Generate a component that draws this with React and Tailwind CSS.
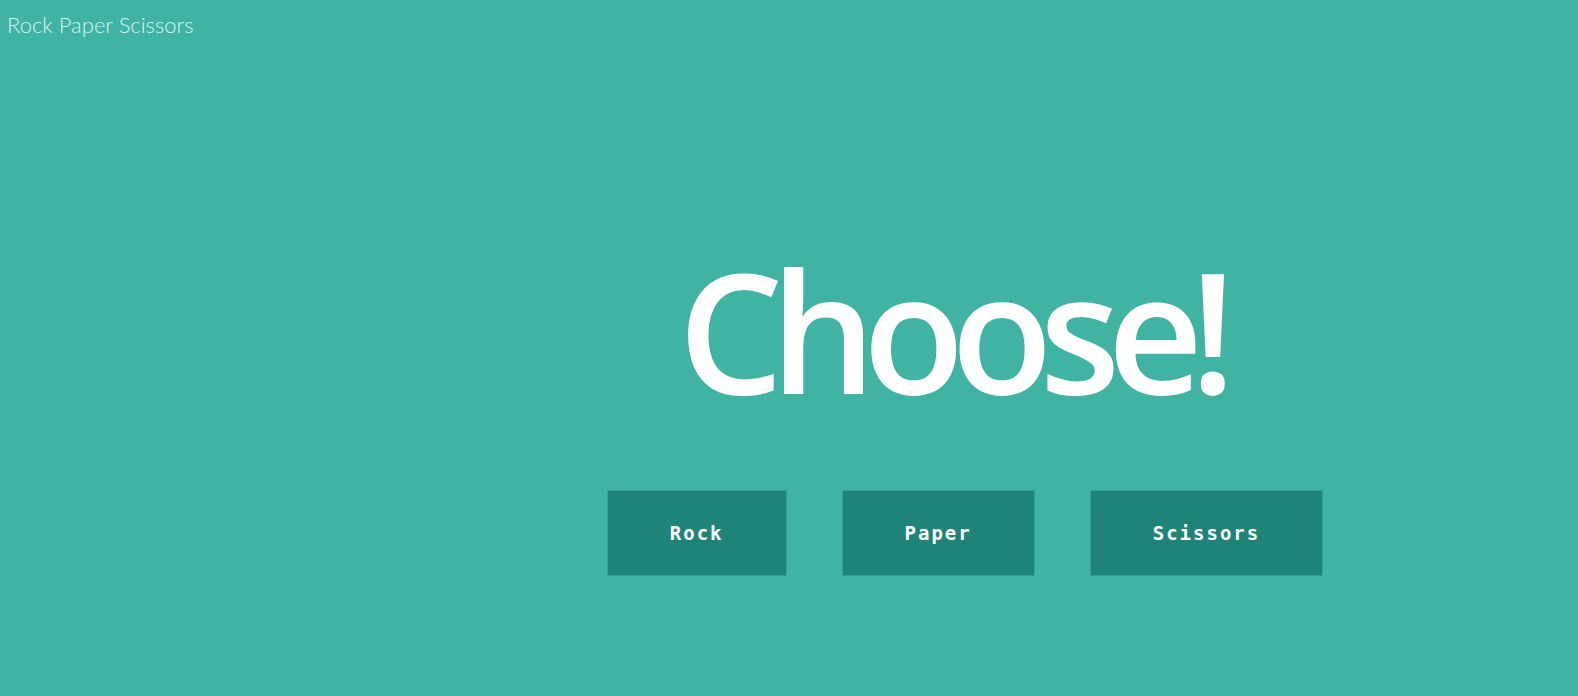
export default function App() {
  const btn =
    "h-[86px] px-[62px] bg-[#208378] border border-[#35a092] text-white text-[19px] tracking-[2px] font-semibold flex items-center justify-center";
  return (
    <div className="w-full h-[696px] bg-[#41b3a3] flex flex-col overflow-hidden">
      <div className="pl-[7px] pt-[14px] text-[22px] font-light text-[#d3f6f1] leading-none font-['Lato',sans-serif]">
        Rock Paper Scissors
      </div>
      <div className="flex-1 pl-[352px] flex flex-col items-center">
        <h1 className="mt-[211px] mr-[29px] text-[166px] font-semibold text-white leading-none tracking-[-13px] font-['Open_Sans',sans-serif]">
          Choose!
        </h1>
        <div className="mt-[77px] flex gap-[55px] font-['DejaVu_Sans_Mono',monospace]">
          <button className={btn}>Rock</button>
          <button className={btn}>Paper</button>
          <button className={btn}>Scissors</button>
        </div>
      </div>
    </div>
  );
}
